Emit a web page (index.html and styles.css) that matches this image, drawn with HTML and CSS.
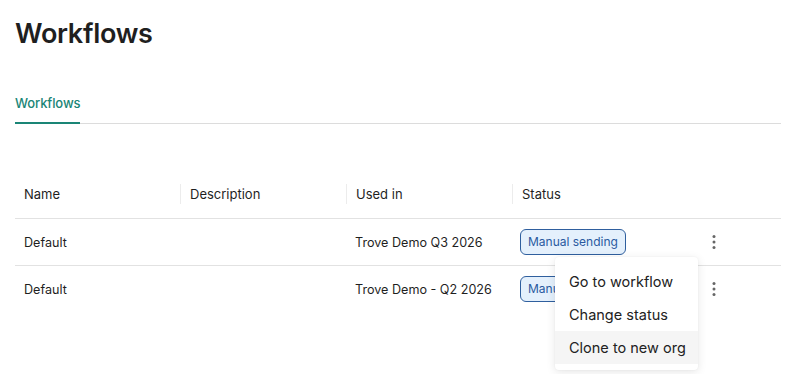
FILE: index.html
```html
<!DOCTYPE html>
<html lang="en">
<head>
    <meta charset="UTF-8">
    <meta name="viewport" content="width=device-width, initial-scale=1.0">
    <title>Workflows</title>
    <link rel="stylesheet" href="styles.css">
</head>
<body>
    <div class="page">
        <h1 class="title">Workflows</h1>
        <div class="tabs">
            <div class="tab active">Workflows</div>
        </div>

        <table class="wf-table">
            <thead>
                <tr>
                    <th><span class="th-inner">Name</span></th>
                    <th><span class="th-inner">Description</span></th>
                    <th><span class="th-inner">Used in</span></th>
                    <th><span class="th-inner">Status</span></th>
                    <th><span class="th-inner"></span></th>
                </tr>
            </thead>
            <tbody>
                <tr>
                    <td>Default</td>
                    <td></td>
                    <td>Trove Demo Q3 2026</td>
                    <td><span class="badge">Manual sending</span></td>
                    <td class="actions">
                        <button class="kebab" aria-label="More actions">
                            <svg width="4" height="14" viewBox="0 0 4 14"><circle cx="2" cy="1.6" r="1.5"/><circle cx="2" cy="7" r="1.5"/><circle cx="2" cy="12.4" r="1.5"/></svg>
                        </button>
                        <ul class="menu">
                            <li class="menu-item">Go to workflow</li>
                            <li class="menu-item">Change status</li>
                            <li class="menu-item hover">Clone to new org</li>
                        </ul>
                    </td>
                </tr>
                <tr>
                    <td>Default</td>
                    <td></td>
                    <td>Trove Demo - Q2 2026</td>
                    <td><span class="badge">Manual sending</span></td>
                    <td class="actions">
                        <button class="kebab" aria-label="More actions">
                            <svg width="4" height="14" viewBox="0 0 4 14"><circle cx="2" cy="1.6" r="1.5"/><circle cx="2" cy="7" r="1.5"/><circle cx="2" cy="12.4" r="1.5"/></svg>
                        </button>
                    </td>
                </tr>
            </tbody>
        </table>
    </div>
</body>
</html>
```

FILE: styles.css
```css
body {
    margin: 0;
    font-family: Inter, "Noto Sans", Arial, sans-serif;
    color: #1f1f1f;
    background: #fff;
}
.page {
    padding: 17px 9px 62px 15px;
}
.title {
    margin: 0;
    font-size: 27px;
    line-height: 34px;
    font-weight: 600;
    color: #1f1f1f;
    letter-spacing: -0.3px;
}
.tabs {
    margin-top: 44px;
    border-bottom: 1px solid #dcdcdc;
    display: flex;
}
.tab {
    font-size: 13px;
    line-height: 16px;
    padding-bottom: 11px;
    color: #1a8576;
    font-weight: 500;
    letter-spacing: -0.1px;
}
.tab.active {
    border-bottom: 2px solid #1a8576;
    margin-bottom: -1px;
}
.wf-table {
    width: 100%;
    margin-top: 46px;
    border-collapse: collapse;
    font-size: 12.6px;
}
.wf-table th {
    text-align: left;
    font-weight: 400;
    font-size: 13px;
    padding: 12px 0;
    height: 24px;
    border-bottom: 1px solid #e2e2e2;
}
.wf-table th:nth-child(1) { width: 165px; }
.wf-table th:nth-child(2) { width: 166px; }
.wf-table th:nth-child(3) { width: 166px; }
.wf-table th:nth-child(4) { width: 135px; }
.th-inner {
    display: block;
    padding-left: 9px;
    line-height: 20px;
    border-left: 1px solid #ececec;
}
.wf-table th:first-child .th-inner {
    border-left: none;
}
.wf-table td {
    height: 46px;
    padding: 0 9px;
    border-bottom: 1px solid #e2e2e2;
    vertical-align: middle;
}
.wf-table tbody tr:last-child td {
    border-bottom: none;
}
.badge {
    display: inline-block;
    height: 24px;
    line-height: 24px;
    padding: 0 7px;
    border: 1px solid #2f5f9e;
    border-radius: 6px;
    background: #e4f0fc;
    color: #2a5aa0;
    font-size: 12px;
    margin-left: -1px;
}
.actions {
    position: relative;
    text-align: center;
}
.kebab {
    background: none;
    border: none;
    padding: 2px 6px;
    cursor: pointer;
    fill: #666;
    line-height: 0;
}
.menu {
    position: absolute;
    top: 38px;
    right: 83px;
    width: 143px;
    margin: 0;
    padding: 8px 0 6px;
    list-style: none;
    background: #fff;
    border-radius: 4px;
    box-shadow: 0 2px 10px rgba(0, 0, 0, 0.1), 0 0 2px rgba(0, 0, 0, 0.05);
    z-index: 2;
    text-align: left;
}
.menu-item {
    padding: 0 14px;
    height: 33px;
    line-height: 33px;
    font-size: 14.5px;
    color: #222;
    white-space: nowrap;
}
.menu-item.hover {
    background: #f5f5f5;
}
```
